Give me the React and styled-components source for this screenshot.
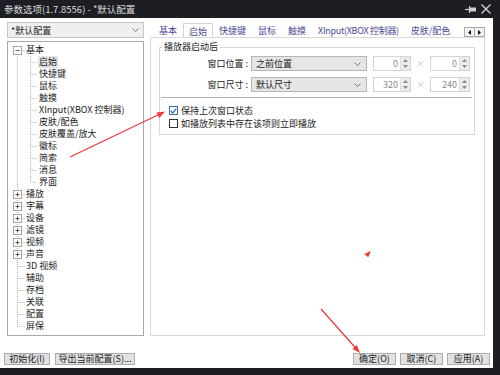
import React from "react";
import styled, { createGlobalStyle } from "styled-components";

const GlobalStyle = createGlobalStyle`
  html, body {
    margin: 0;
    padding: 0;
    background: #1d1e23;
  }
  body {
    font-family: "Noto Sans CJK SC", "Noto Sans", sans-serif;
    font-size: 9px;
    color: #1b1b1b;
  }
`;

const Page = styled.div`
  position: relative;
  width: 500px;
  height: 375px;
  overflow: hidden;
  background: #1d1e23;
`;

const TitleBar = styled.div`
  height: 18px;
  display: flex;
  align-items: center;
  justify-content: space-between;
  padding: 0 9px 0 4px;
  color: #dadada;
  font-size: 9.5px;
`;

const TitleIcons = styled.div`
  display: flex;
  align-items: center;
  gap: 5px;
`;

const Window = styled.div`
  width: 493px;
  height: 350px;
  background: #fff;
  display: flex;
  flex-direction: column;
`;

const Main = styled.div`
  height: 318px;
  box-sizing: border-box;
  padding: 4px 8px 0 7px;
  display: flex;
  gap: 6px;
`;

const LeftCol = styled.div`
  flex: none;
  width: 137px;
  display: flex;
  flex-direction: column;
  gap: 3px;
`;

const ProfileSelect = styled.div`
  height: 16px;
  box-sizing: border-box;
  border: 1px solid #c6c6c6;
  background: #efefef;
  display: flex;
  align-items: center;
  justify-content: space-between;
  padding: 0 4px 0 3px;
`;

const TreeBox = styled.div`
  flex: 1;
  border: 1px solid #a9a9a9;
  padding-top: 2px;
  background: #fff;
`;

const TreeRow = styled.div`
  height: 12px;
  display: flex;
  align-items: center;
  white-space: nowrap;
`;

const TreeLabel = styled.span`
  line-height: 12px;
  padding: 0 1px;
  background: ${(p) => (p.$selected ? "#e4e4e4" : "transparent")};
`;

const RightCol = styled.div`
  flex: 1;
  min-width: 0;
  display: flex;
  flex-direction: column;
`;

const TabStrip = styled.div`
  height: 15px;
  display: flex;
  align-items: flex-end;
  position: relative;
  z-index: 1;
`;

const Tabs = styled.div`
  flex: 1;
  min-width: 0;
  display: flex;
  align-items: flex-end;
  overflow: hidden;
  height: 100%;
  padding-left: 3px;
`;

const Tab = styled.div`
  flex: none;
  box-sizing: border-box;
  height: ${(p) => (p.$active ? "15px" : "14px")};
  padding: 0 5px;
  display: flex;
  align-items: center;
  white-space: nowrap;
  letter-spacing: ${(p) => (p.$tight ? "-0.3px" : "0")};
  color: #4a4a96;
  background: ${(p) => (p.$active ? "#fff" : "transparent")};
  border: 1px solid ${(p) => (p.$active ? "#d3d3d3" : "transparent")};
  border-bottom: none;
  margin-bottom: ${(p) => (p.$active ? "-1px" : "0")};
`;

const ScrollBtns = styled.div`
  display: flex;
  align-self: flex-start;
  margin-top: 5px;
`;

const ScrollBtn = styled.div`
  width: 11px;
  height: 10px;
  box-sizing: border-box;
  border: 1px solid #adadad;
  margin-left: ${(p) => (p.$second ? "-1px" : "0")};
  background: #f2f2f2;
  display: flex;
  align-items: center;
  justify-content: center;
`;

const TabPanel = styled.div`
  flex: 1;
  border: 1px solid #d9d9d9;
  padding: 3px 9px 0 8px;
`;

const Group = styled.fieldset`
  margin: 0;
  border: 1px solid #d8d8d8;
  padding: 3px 1px 4px 0;
  min-width: 0;
`;

const Legend = styled.legend`
  padding: 0 2px;
  margin-left: 2px;
  line-height: 12px;
`;

const FieldRow = styled.div`
  display: flex;
  align-items: center;
  height: 15px;
  margin-bottom: ${(p) => (p.$last ? "0" : "6px")};
`;

const FieldLabel = styled.div`
  width: 88px;
  text-align: right;
  margin-right: 3px;
  white-space: nowrap;
`;

const ComboBox = styled.div`
  width: 116px;
  height: 15px;
  box-sizing: border-box;
  border: 1px solid #b6b6b6;
  background: #e6e6e6;
  display: flex;
  align-items: center;
  justify-content: space-between;
  padding: 0 5px 0 4px;
  margin-right: 6px;
`;

const SpinBox = styled.div`
  width: ${(p) => p.$w}px;
  height: 15px;
  box-sizing: border-box;
  border: 1px solid #d4d4d4;
  display: flex;
`;

const SpinValue = styled.div`
  flex: 1;
  text-align: right;
  padding-right: 2px;
  line-height: 13px;
  color: #8c8c8c;
`;

const SpinArrows = styled.div`
  width: 9px;
  background: #ececec;
  border-left: 1px solid #dedede;
  display: flex;
  flex-direction: column;
  align-items: center;
  justify-content: space-around;
`;

const Times = styled.div`
  width: 19px;
  text-align: center;
  color: #c4c4c4;
`;

const Separator = styled.div`
  height: 1px;
  background: #b3b3b3;
  margin: 5px 1px 6px 1px;
`;

const CheckRow = styled.label`
  height: 13px;
  display: flex;
  align-items: center;
  gap: 3px;
  padding-left: 9px;
  white-space: nowrap;
`;

const CheckBox = styled.span`
  width: 9px;
  height: 9px;
  box-sizing: border-box;
  border: 1px solid ${(p) => (p.$checked ? "#3a6ea5" : "#333")};
  background: #fff;
  display: flex;
  align-items: center;
  justify-content: center;
`;

const Footer = styled.div`
  flex: 1;
  display: flex;
  justify-content: space-between;
  align-items: flex-start;
  padding: 17px 3px 0 4px;
`;

const ButtonGroup = styled.div`
  display: flex;
  gap: ${(p) => p.$gap}px;
`;

const Button = styled.button`
  width: ${(p) => p.$w}px;
  height: 12px;
  box-sizing: border-box;
  padding: 0;
  border: 1px solid #adadad;
  background: #e1e1e1;
  font-family: inherit;
  font-size: 9px;
  line-height: 10px;
  color: #1b1b1b;
`;

const Overlay = styled.svg`
  position: absolute;
  left: 0;
  top: 0;
  pointer-events: none;
`;

const DOT = { stroke: "#b4b4b4", strokeWidth: 1, strokeDasharray: "1 1" };

function Chevron() {
  return (
    <svg width="7" height="4" viewBox="0 0 7 4">
      <polyline points="0.5,0.5 3.5,3.5 6.5,0.5" fill="none" stroke="#6b6b6b" strokeWidth="0.9" />
    </svg>
  );
}

function RootGutter({ first, last, expander }) {
  return (
    <svg width="17" height="12" style={{ flex: "none" }}>
      <line x1="9.5" y1={first ? 6 : 0} x2="9.5" y2={last ? 6.5 : 12} {...DOT} />
      <line x1="9.5" y1="6.5" x2="17" y2="6.5" {...DOT} />
      {expander && (
        <g>
          <rect x="5.5" y="2.5" width="8" height="8" fill="#fff" stroke="#a5a5a5" />
          <line x1="7.5" y1="6.5" x2="11.5" y2="6.5" stroke="#5a5a5a" />
          {expander === "plus" && <line x1="9.5" y1="4.5" x2="9.5" y2="8.5" stroke="#5a5a5a" />}
        </g>
      )}
    </svg>
  );
}

function ChildGutter({ last }) {
  return (
    <svg width="30" height="12" style={{ flex: "none" }}>
      <line x1="9.5" y1="0" x2="9.5" y2="12" {...DOT} />
      <line x1="22.5" y1="0" x2="22.5" y2={last ? 6.5 : 12} {...DOT} />
      <line x1="22.5" y1="6.5" x2="29" y2="6.5" {...DOT} />
    </svg>
  );
}

const basicChildren = [
  "启始",
  "快捷键",
  "鼠标",
  "触摸",
  "XInput(XBOX 控制器)",
  "皮肤/配色",
  "皮肤覆盖/放大",
  "徽标",
  "简索",
  "消息",
  "界面",
];

const rootItems = [
  { label: "基本", expander: "minus" },
  { label: "播放", expander: "plus" },
  { label: "字幕", expander: "plus" },
  { label: "设备", expander: "plus" },
  { label: "滤镜", expander: "plus" },
  { label: "视频", expander: "plus" },
  { label: "声音", expander: "plus" },
  { label: "3D 视频" },
  { label: "辅助" },
  { label: "存档" },
  { label: "关联" },
  { label: "配置" },
  { label: "屏保" },
];

const tabs = ["基本", "启始", "快捷键", "鼠标", "触摸", "XInput(XBOX 控制器)", "皮肤/配色"];

function Spin({ value, w }) {
  return (
    <SpinBox $w={w}>
      <SpinValue>{value}</SpinValue>
      <SpinArrows>
        <svg width="5" height="3"><polygon points="2.5,0 5,3 0,3" fill="#8a8a8a" /></svg>
        <svg width="5" height="3"><polygon points="0,0 5,0 2.5,3" fill="#8a8a8a" /></svg>
      </SpinArrows>
    </SpinBox>
  );
}

function Tree() {
  return (
    <TreeBox>
      {rootItems.map((item, i) => (
        <React.Fragment key={item.label}>
          <TreeRow>
            <RootGutter first={i === 0} last={i === rootItems.length - 1} expander={item.expander} />
            <TreeLabel>{item.label}</TreeLabel>
          </TreeRow>
          {i === 0 &&
            basicChildren.map((c, j) => (
              <TreeRow key={c}>
                <ChildGutter last={j === basicChildren.length - 1} />
                <TreeLabel $selected={j === 0}>{c}</TreeLabel>
              </TreeRow>
            ))}
        </React.Fragment>
      ))}
    </TreeBox>
  );
}

export default function App() {
  return (
    <Page>
      <GlobalStyle />
      <TitleBar>
        <span>参数选项(1.7.8556) - *默认配置</span>
        <TitleIcons>
          <svg width="11" height="9" viewBox="0 0 11 9">
            <line x1="0" y1="4.5" x2="4" y2="4.5" stroke="#cfcfcf" strokeWidth="1.2" />
            <line x1="4.5" y1="1" x2="4.5" y2="8" stroke="#cfcfcf" strokeWidth="1.2" />
            <rect x="5" y="2.5" width="6" height="4" fill="#cfcfcf" />
          </svg>
          <svg width="10" height="10" viewBox="0 0 10 10">
            <line x1="0.5" y1="0.5" x2="9.5" y2="9.5" stroke="#d6d6d6" strokeWidth="1.2" />
            <line x1="9.5" y1="0.5" x2="0.5" y2="9.5" stroke="#d6d6d6" strokeWidth="1.2" />
          </svg>
        </TitleIcons>
      </TitleBar>

      <Window>
        <Main>
          <LeftCol>
            <ProfileSelect>
              <span>*默认配置</span>
              <Chevron />
            </ProfileSelect>
            <Tree />
          </LeftCol>

          <RightCol>
            <TabStrip>
              <Tabs>
                {tabs.map((t, i) => (
                  <Tab key={t} $active={i === 1} $tight={t.startsWith("X")}>{t}</Tab>
                ))}
              </Tabs>
              <ScrollBtns>
                <ScrollBtn>
                  <svg width="3" height="5"><polygon points="3,0 3,5 0,2.5" fill="#111" /></svg>
                </ScrollBtn>
                <ScrollBtn $second>
                  <svg width="3" height="5"><polygon points="0,0 0,5 3,2.5" fill="#111" /></svg>
                </ScrollBtn>
              </ScrollBtns>
            </TabStrip>

            <TabPanel>
              <Group>
                <Legend>播放器启动后</Legend>
                <FieldRow>
                  <FieldLabel>窗口位置 :</FieldLabel>
                  <ComboBox>
                    <span>之前位置</span>
                    <Chevron />
                  </ComboBox>
                  <Spin value="0" w={38} />
                  <Times>×</Times>
                  <Spin value="0" w={40} />
                </FieldRow>
                <FieldRow $last>
                  <FieldLabel>窗口尺寸 :</FieldLabel>
                  <ComboBox>
                    <span>默认尺寸</span>
                    <Chevron />
                  </ComboBox>
                  <Spin value="320" w={38} />
                  <Times>×</Times>
                  <Spin value="240" w={40} />
                </FieldRow>
                <Separator />
                <CheckRow>
                  <CheckBox $checked>
                    <svg width="7" height="6" viewBox="0 0 7 6">
                      <polyline points="0.8,3 2.7,5 6.2,0.8" fill="none" stroke="#2f6cc0" strokeWidth="1.2" />
                    </svg>
                  </CheckBox>
                  保持上次窗口状态
                </CheckRow>
                <CheckRow>
                  <CheckBox />
                  如播放列表中存在该项则立即播放
                </CheckRow>
              </Group>
            </TabPanel>
          </RightCol>
        </Main>

        <Footer>
          <ButtonGroup $gap={5}>
            <Button $w={46}>初始化(I)</Button>
            <Button $w={80}>导出当前配置(S)...</Button>
          </ButtonGroup>
          <ButtonGroup $gap={4}>
            <Button $w={43}>确定(O)</Button>
            <Button $w={43}>取消(C)</Button>
            <Button $w={43}>应用(A)</Button>
          </ButtonGroup>
        </Footer>
      </Window>

      <Overlay width="500" height="375" viewBox="0 0 500 375">
        <line x1="70" y1="157" x2="160" y2="114" stroke="#ef3a3a" strokeWidth="1.3" />
        <polygon points="165,111.5 159.3,118 156.6,112.4" fill="#ef3a3a" />
        <line x1="321" y1="309" x2="357" y2="349.5" stroke="#ef3a3a" strokeWidth="1.3" />
        <polygon points="360,353 356.9,345 352.5,349" fill="#ef3a3a" />
        <polygon points="370.7,251 364.3,254 368.3,257.3" fill="#ef3a3a" />
      </Overlay>
    </Page>
  );
}
